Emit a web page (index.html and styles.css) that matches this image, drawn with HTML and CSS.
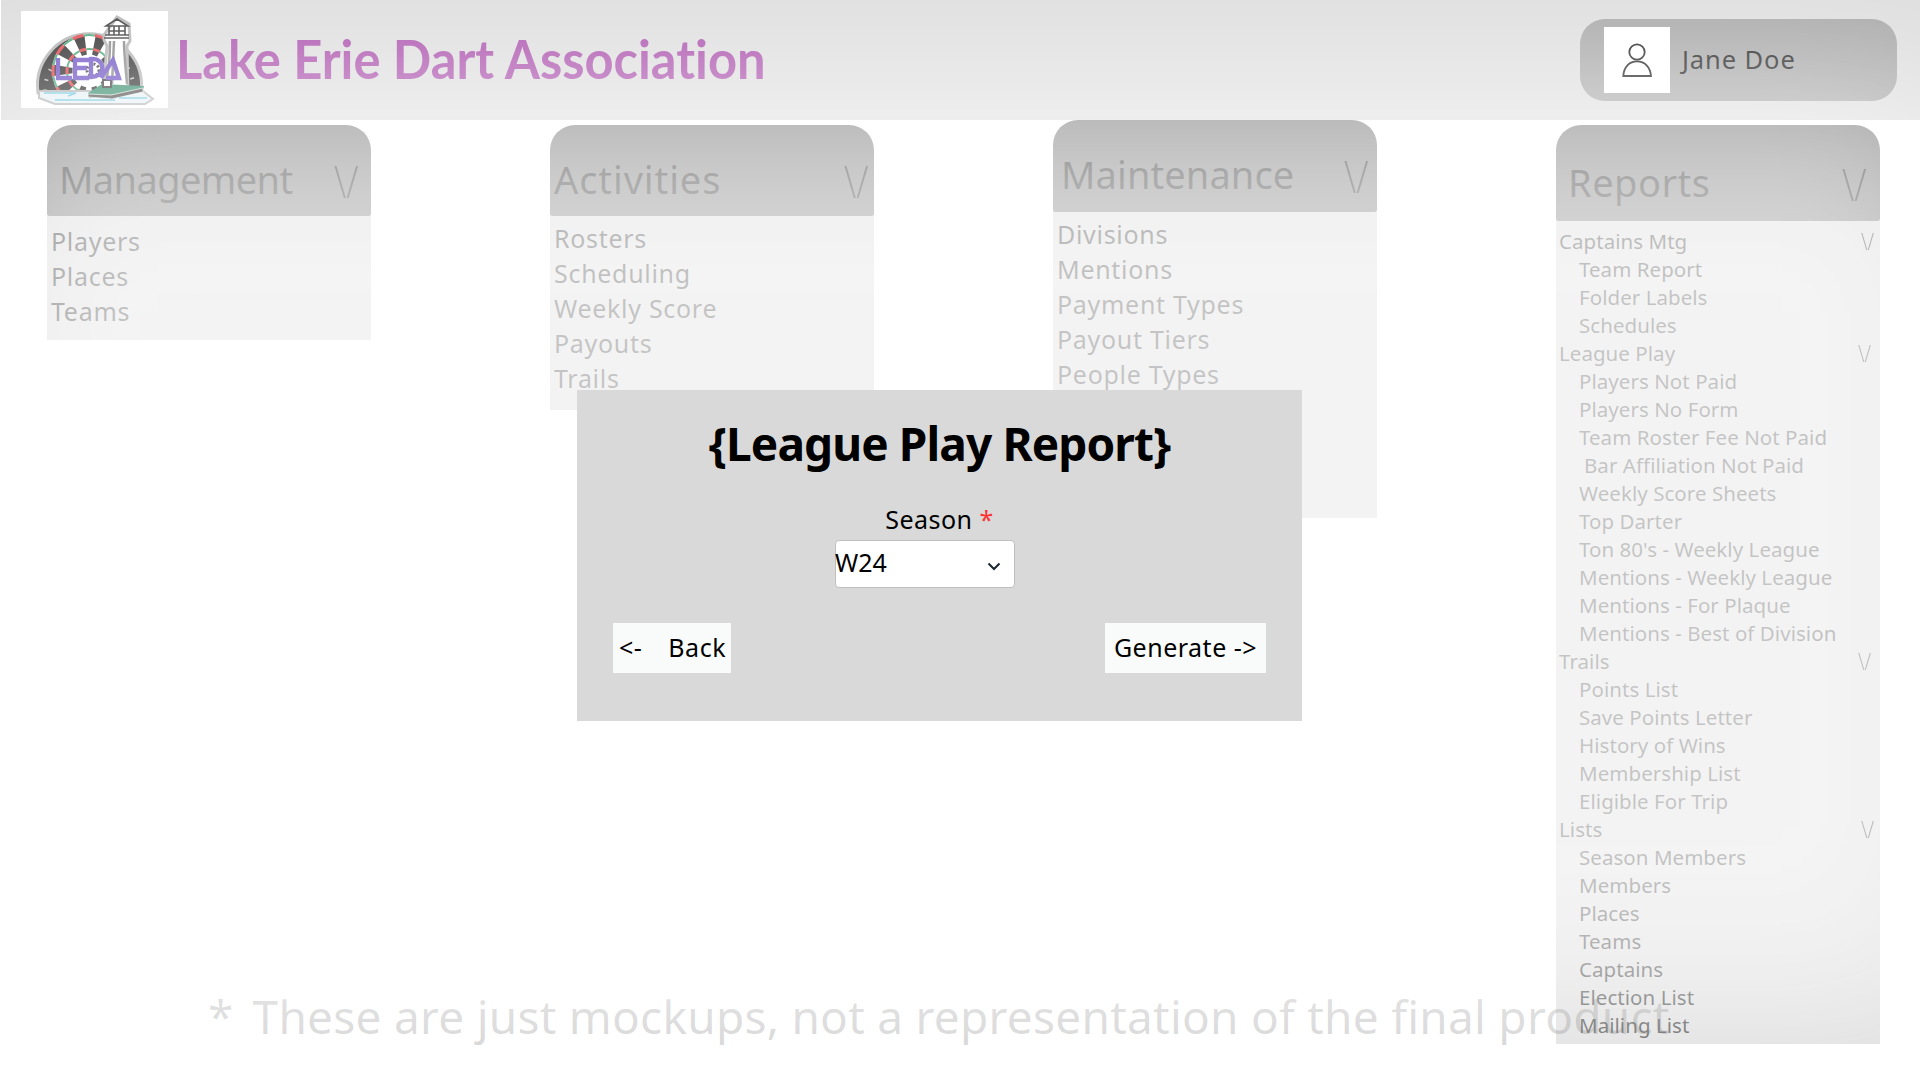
FILE: index.html
```html
<!DOCTYPE html>
<html lang="en">
<head>
<meta charset="utf-8">
<title>Lake Erie Dart Association</title>
<link rel="stylesheet" href="styles.css">
</head>
<body>
<div class="page">
  <header class="topbar">
    <svg class="logo" viewBox="0 0 147 97">
      <defs><clipPath id="board"><path d="M0 0h147v81H0Z"/></clipPath></defs>
      <rect width="147" height="97" fill="#fff"/>
      <path d="M17 82A52 52 0 1 1 120 82Z" fill="#111" stroke="#aaa" stroke-width="3"/>
      <path d="M24 80A44.500 44.500 0 1 1 113 80" fill="none" stroke="#bbb" stroke-width="4" stroke-dasharray="1.500 9"/>
      <g fill="none" clip-path="url(#board)">
        <circle cx="68" cy="60" r="37" fill="#fff"/>
        <circle cx="68" cy="60" r="26" stroke="#111" stroke-width="19" stroke-dasharray="8.168 8.168" transform="rotate(-9 68 60)"/>
        <circle cx="68" cy="60" r="36" stroke="#e02a30" stroke-width="3" stroke-dasharray="11.310 11.310" transform="rotate(-9 68 60)"/>
        <circle cx="68" cy="60" r="36" stroke="#2b9a62" stroke-width="2" stroke-dasharray="11.310 11.310" transform="rotate(9 68 60)"/>
        <circle cx="68" cy="60" r="22" stroke="#e02a30" stroke-width="3" stroke-dasharray="6.912 6.912" transform="rotate(-9 68 60)"/>
        <circle cx="68" cy="60" r="22" stroke="#2b9a62" stroke-width="2" stroke-dasharray="6.912 6.912" transform="rotate(9 68 60)"/>
      </g>
      <circle cx="72" cy="59" r="6" fill="#fff" stroke="#222" stroke-width="3" stroke-dasharray="2 2"/>
      <path d="M83 24 96 6l12 7 1 17-3 5 1 48H82l4-48-3-6Z" fill="#fff" stroke="#aaa" stroke-width="3"/>
      <path d="M85 15 96 8l11 7ZM84 24h24M83 27h25M88 15v9M93 15v9M98 15v9M104 15v9M88 20h16" fill="none" stroke="#222" stroke-width="1.600"/>
      <path d="M89 30c0 18-2 34-5 44M93 30l-2 43M103 30c0 14 2 30 3 43" fill="none" stroke="#777" stroke-width="2.500"/>
      <path d="M18 80h104l10 8-8 5H34l-16-6Z" fill="#e2eef3" stroke="#aaa" stroke-width="2"/>
      <path d="m67 82 14-9 42 2-1 5-32 6-22 1Z" fill="#197c55"/>
      <path d="m67 83 23 1 32-7v4l-31 7-24-2Z" fill="#333" stroke="#fff" stroke-width=".7"/>
      <path d="M82 69h8v7h-8Z" fill="#fff" stroke="#222" stroke-width="2"/>
      <path d="M23 82h32l-8 3M34 89h60M98 87h28" fill="none" stroke="#57bfd8" stroke-width="1.600"/>
      <path d="M37 47v20h14M54 47v20h14M54 49h14M54 57h12M70 48c15-1 15 18 0 18ZM80 67l12-18 6 18H85" fill="none" stroke="#5a3bbb" stroke-width="4.300"/>
    </svg>
    <h1 class="brand">Lake Erie Dart Association</h1>
    <div class="user">
      <svg class="avatar" viewBox="0 0 66 66"><rect width="66" height="66" fill="#fff"/><circle cx="33" cy="25" r="7.700" fill="none" stroke="#000" stroke-width="1.800"/><path d="M19.300 49c.5-9 6-14.600 13.700-14.600S46.300 40 47 49Z" fill="none" stroke="#000" stroke-width="1.800"/></svg>
      <span class="username">Jane Doe</span>
    </div>
  </header>

  <main class="columns">
    <section class="menu management">
      <h2 class="menu-head"><span>Management</span><span class="caret">\/</span></h2>
      <ul class="menu-body"><li>Players</li><li>Places</li><li>Teams</li></ul>
    </section>
    <section class="menu activities">
      <h2 class="menu-head"><span>Activities</span><span class="caret">\/</span></h2>
      <ul class="menu-body"><li>Rosters</li><li>Scheduling</li><li>Weekly Score</li><li>Payouts</li><li>Trails</li></ul>
    </section>
    <section class="menu maintenance">
      <h2 class="menu-head"><span>Maintenance</span><span class="caret">\/</span></h2>
      <ul class="menu-body"><li>Divisions</li><li>Mentions</li><li>Payment Types</li><li>Payout Tiers</li><li>People Types</li></ul>
    </section>
    <section class="menu reports">
      <h2 class="menu-head"><span>Reports</span><span class="caret">\/</span></h2>
      <ul class="menu-body">
        <li class="group"><span>Captains Mtg</span><span class="caret">\/</span></li>
        <li>Team Report</li><li>Folder Labels</li><li>Schedules</li>
        <li class="group inset"><span>League Play</span><span class="caret">\/</span></li>
        <li>Players Not Paid</li><li>Players No Form</li><li>Team Roster Fee Not Paid</li><li class="nudged">Bar Affiliation Not Paid</li><li>Weekly Score Sheets</li><li>Top Darter</li><li>Ton 80's - Weekly League</li><li>Mentions - Weekly League</li><li>Mentions - For Plaque</li><li>Mentions - Best of Division</li>
        <li class="group inset"><span>Trails</span><span class="caret">\/</span></li>
        <li>Points List</li><li>Save Points Letter</li><li>History of Wins</li><li>Membership List</li><li>Eligible For Trip</li>
        <li class="group"><span>Lists</span><span class="caret">\/</span></li>
        <li>Season Members</li><li>Members</li><li>Places</li><li>Teams</li><li>Captains</li><li>Election List</li><li>Mailing List</li>
      </ul>
    </section>
  </main>

  <p class="notice"><span class="star">*</span><span>These are just mockups, not a representation of the final product</span></p>
  <div class="veil"></div>

  <form class="dialog">
    <h2 class="dialog-title">{League Play Report}</h2>
    <div class="label">Season <span class="required">*</span></div>
    <div class="select"><span class="value">W24</span><svg class="chevron" viewBox="0 0 14 9"><path d="m1.500 1.500 5.500 5.500 5.500-5.500" fill="none" stroke="#1d2730" stroke-width="2"/></svg></div>
    <div class="actions">
      <div class="button back"><span>&lt;-</span><span>Back</span></div>
      <div class="button generate">Generate -&gt;</div>
    </div>
  </form>
</div>
</body>
</html>
```
FILE: styles.css
```css
* { box-sizing: border-box; margin: 0; padding: 0; }
body { background: #fff; font-family: "Noto Sans", sans-serif; color: #000; }
.page { position: relative; width: 1920px; height: 1080px; overflow: hidden; }
ul { list-style: none; }
h1, h2 { font-weight: 400; }

.topbar { display: flex; align-items: flex-start; height: 120px; margin-left: 1px; padding: 11px 23px 0 20px; background: #d9d9d9; }
.logo { width: 147px; height: 97px; flex: none; }
.brand { width: 600px; margin: 21px 0 0 8px; font: 700 54px/54px Lato, sans-serif; font-variant-ligatures: none; color: #9e37a0; white-space: nowrap; transform: scaleX(.938); transform-origin: left; }
.user { display: flex; align-items: center; width: 317px; height: 82px; margin: 8px 0 0 auto; padding-left: 24px; border-radius: 25px; background: #9b9b9b; }
.avatar { width: 66px; height: 66px; }
.username { margin: -3px 0 0 12px; font-size: 25.500px; letter-spacing: .9px; }

.columns { display: flex; align-items: flex-start; gap: 179.500px; padding: 5px 0 0 47px; }
.menu { width: 323.500px; flex: none; }
.menu-head { display: flex; justify-content: space-between; height: 91px; padding: 35px 12px 0; border-radius: 25px 25px 2px 2px; background: linear-gradient(#6a6a6a, #5c5c5c); font-size: 38px; line-height: 38px; }
.menu-head .caret { font-size: 44px; font-weight: 300; letter-spacing: 0; line-height: 42px; transform: scaleX(.8); transform-origin: right; }
.menu-body { background: #cfcfcf; padding: 8px 4px 0; font-size: 25px; letter-spacing: .7px; line-height: 35px; }
.management .menu-head { letter-spacing: -.6px; }
.management .menu-body { height: 124px; }
.activities .menu-head { padding: 35px 5px 0 4px; letter-spacing: .9px; }
.activities .menu-body { height: 194px; padding-top: 5px; }
.maintenance { margin-top: -5px; }
.maintenance .menu-head { height: 92px; padding: 35px 8px 0; letter-spacing: .1px; }
.maintenance .menu-body { height: 306px; padding-top: 5px; }
.reports .menu-head { height: 96px; padding: 38px 13px 0 12px; letter-spacing: .5px; }
.reports .menu-body { height: 823px; padding: 6px 5px 0 23px; font-size: 20.500px; letter-spacing: .05px; line-height: 28px; }
.reports .nudged { padding-left: 5px; }
.group { display: flex; justify-content: space-between; margin-left: -20px; }
.group.inset { padding-right: 3px; }
.group .caret { font-size: 23px; font-weight: 300; transform: scaleX(.82); transform-origin: right; }

.notice { position: absolute; left: 208px; top: 984px; display: flex; gap: 19px; font-size: 46px; line-height: 64px; letter-spacing: .24px; white-space: nowrap; color: rgba(0, 0, 0, .3); }
.veil { position: absolute; inset: 63px -110px 5px -90px; border-radius: 80px; background: #fff; opacity: .77; filter: blur(105px); }

.dialog { position: absolute; left: 577px; top: 390px; display: flex; flex-direction: column; align-items: center; width: 725px; height: 331px; padding: 21px 36px 0; background: #d9d9d9; font-size: 25px; }
.dialog-title { font-size: 46px; font-weight: 700; line-height: 64px; letter-spacing: -.9px; white-space: nowrap; }
.label { margin-top: 27px; line-height: 35px; letter-spacing: .5px; }
.required { color: #ff3131; }
.select { display: flex; justify-content: space-between; width: 180px; height: 48px; margin: 3px 29px 0 0; padding-right: 13px; border: 1px solid #bfbfbf; border-radius: 4px; background: #fff; line-height: 43px; }
.value { margin-left: -1px; }
.chevron { width: 14px; height: 9px; margin-top: 21px; }
.actions { display: flex; justify-content: space-between; width: 100%; margin-top: 35px; }
.button { display: flex; height: 50px; line-height: 49px; letter-spacing: .5px; background: #f9fbfa; }
.back { width: 118px; justify-content: space-between; padding: 0 5px 0 6px; }
.generate { width: 161px; justify-content: center; white-space: nowrap; }
```
